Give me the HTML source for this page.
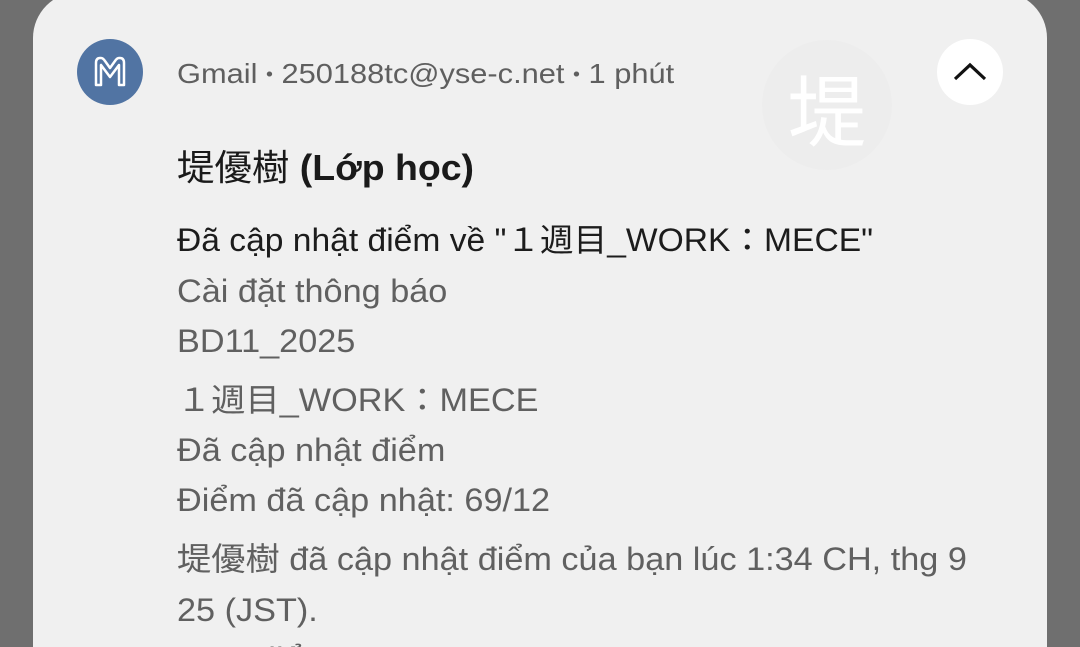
<!DOCTYPE html>
<html><head><meta charset="utf-8"><style>
html,body{margin:0;padding:0;width:1080px;height:647px;overflow:hidden;background:#6f6f6f;position:relative;}
.card{position:absolute;left:33px;top:-8px;width:1014px;height:655px;background:#f0f0f0;border-radius:46px 46px 0 0;}
.t{position:absolute;left:177px;white-space:nowrap;font-family:"Liberation Sans","Noto Sans CJK JP",sans-serif;transform-origin:left center;transform:scaleX(1.07);line-height:1;}
.g{color:#606060;font-size:32px;}
.d{color:#1c1c1c;font-size:32px;transform:scaleX(1.05);}
</style></head><body>
<div class="card"></div>
<div style="position:absolute;left:77px;top:39px;width:66px;height:66px;border-radius:50%;background:#5174a3;"></div>
<svg style="position:absolute;left:77px;top:39px" width="66" height="66" viewBox="0 0 66 66"><path d="M19 46V24q0-5 4-5h1q2 0 4 3l5 7 5-7q2-3 4-3h1q4 0 4 5v22h-5V26l-9 12-9-12v20z" fill="none" stroke="#fff" stroke-width="2.5" stroke-linejoin="round"/></svg>
<div class="t" style="top:60px;font-size:28px;color:#5f5f5f;transform:scaleX(1.1);">Gmail&nbsp;<span style="font-size:18px;vertical-align:3px">•</span>&nbsp;250188tc@yse-c.net&nbsp;<span style="font-size:18px;vertical-align:3px">•</span>&nbsp;1 phút</div>
<div style="position:absolute;left:762px;top:40px;width:130px;height:130px;border-radius:50%;background:#ededed;"></div>
<div style="position:absolute;left:762px;top:68px;width:130px;text-align:center;font-family:'Noto Sans CJK JP',sans-serif;font-size:78px;line-height:1;color:#fff;">堤</div>
<div style="position:absolute;left:937px;top:39px;width:66px;height:66px;border-radius:50%;background:#fff;"></div>
<svg style="position:absolute;left:937px;top:39px" width="66" height="66" viewBox="0 0 66 66"><path d="M18 40L33 26L48 40" fill="none" stroke="#111" stroke-width="3.2"/></svg>
<div class="t" style="top:150px;font-size:36px;color:#1a1a1a;transform:scaleX(1.04);">堤優樹 <b>(Lớp học)</b></div>
<div class="t d" style="top:224px;">Đã cập nhật điểm về "１週目_WORK：MECE"</div>
<div class="t g" style="top:275px;">Cài đặt thông báo</div>
<div class="t g" style="top:325px;">BD11_2025</div>
<div class="t g" style="top:384px;">１週目_WORK：MECE</div>
<div class="t g" style="top:434px;">Đã cập nhật điểm</div>
<div class="t g" style="top:484px;">Điểm đã cập nhật: 69/12</div>
<div class="t g" style="top:543px;">堤優樹 đã cập nhật điểm của bạn lúc 1:34 CH, thg 9</div>
<div class="t g" style="top:594px;">25 (JST).</div>
<div class="t g" style="top:643px;">Xem điểm</div>
</body></html>
